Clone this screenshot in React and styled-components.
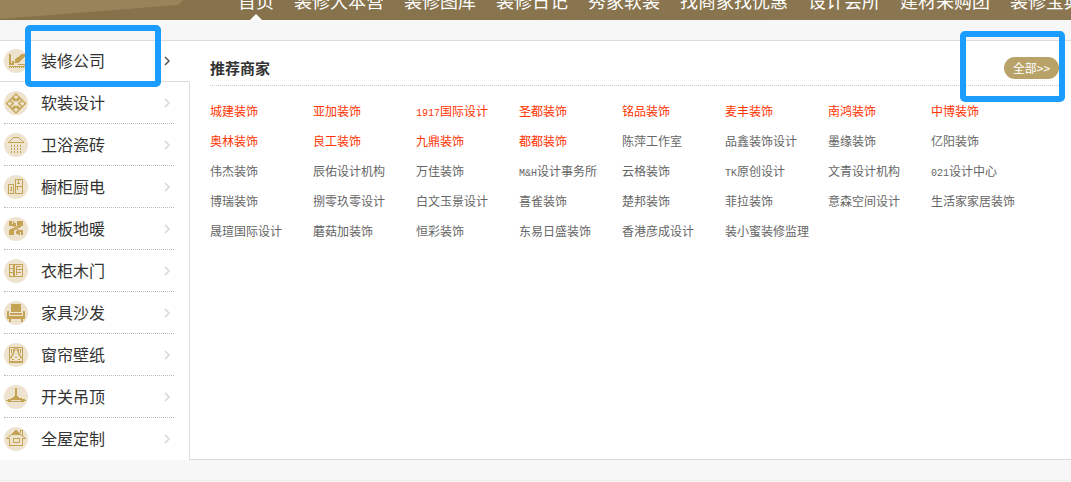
import React from "react";
import styled, { createGlobalStyle, css } from "styled-components";

const GlobalStyle = createGlobalStyle`
  *, *::before, *::after { box-sizing: border-box; }
  body {
    margin: 0;
    overflow-x: hidden;
    background: #f7f7f7;
    color: #333;
    font-family: "Noto Sans CJK SC", sans-serif;
  }
  ul { list-style: none; margin: 0; padding: 0; }
  a { color: inherit; text-decoration: none; }
`;

const Header = styled.header`
  position: relative;
  display: flex;
  align-items: flex-end;
  height: 20px;
  overflow: hidden;
  background: linear-gradient(90deg, #85714a, #8a7650);
`;

const HeaderFacets = styled.svg`
  position: absolute;
  top: 0;
  left: 0;
`;

const NavList = styled.ul`
  position: relative;
  display: flex;
  padding-left: 228px;
`;

const NavLink = styled.a`
  display: block;
  padding: 0 10px;
  color: #fff;
  font-size: 18px;
  line-height: 40px;
  white-space: nowrap;
  ${(p) =>
    p.$active &&
    css`
      &::after {
        content: "";
        position: absolute;
        bottom: 0;
        left: 250px;
        border: 6px solid transparent;
        border-top: 0;
        border-bottom-color: #fff;
      }
    `}
`;

const Panel = styled.main`
  display: flex;
  margin-top: 20px;
  border-top: 1px solid #dcdcdc;
  background: #fff;
`;

const Sidebar = styled.nav`
  flex: none;
  width: 190px;
`;

const CategoryRow = styled.li`
  position: relative;
  padding: 0 15px 0 4px;
  border-right: 1px solid ${(p) => (p.$active ? "transparent" : "#dcdcdc")};
  ${(p) => p.$active && "border-bottom: 1px solid #dcdcdc;"}
`;

const CategoryLink = styled.a`
  display: flex;
  align-items: center;
  height: ${(p) => (p.$active ? "40px" : "42px")};
  padding-right: 4px;
  border-bottom: ${(p) => (p.$active || p.$last ? "0" : "1px dotted #bbb")};
  color: ${(p) => (p.$active ? "#555" : "#d5d5d5")};
`;

const CategoryName = styled.span`
  flex: 1;
  margin-left: 13px;
  padding-bottom: 2px;
  color: #333;
  font-size: 16px;
  line-height: 24px;
`;

const Content = styled.section`
  flex: 1;
  min-width: 0;
  min-height: 419px;
  padding: 0 12px 0 20px;
  border-bottom: 1px solid #dcdcdc;
`;

const ContentHead = styled.div`
  display: flex;
  align-items: center;
  justify-content: space-between;
  height: 45px;
  padding-top: 10px;
  border-bottom: 1px dotted #ccc;
`;

const Title = styled.h2`
  margin: 0;
  font-size: 15px;
  font-weight: 700;
  line-height: 24px;
`;

const AllWrap = styled.div`
  position: relative;
`;

const AllButton = styled.button`
  display: block;
  width: 55px;
  height: 22px;
  padding: 0;
  border: 0;
  border-radius: 11px;
  background: #b9a267;
  color: #fff;
  font-family: inherit;
  font-size: 12px;
  line-height: 22px;
`;

const ShopGrid = styled.ul`
  display: grid;
  grid-template-columns: repeat(auto-fill, 103px);
  grid-auto-rows: 30px;
  padding-top: 10px;
`;

const ShopLink = styled.a`
  display: block;
  color: ${(p) => (p.$hot ? "#ff3300" : "#666")};
  font-size: 12px;
  line-height: 30px;
  white-space: nowrap;
`;

const Latin = styled.span`
  font-family: "Liberation Mono", monospace;
  font-size: 10px;
`;

const Marker = styled.span`
  position: absolute;
  z-index: 2;
  top: ${(p) => p.$top};
  left: ${(p) => p.$left};
  width: ${(p) => p.$width};
  height: ${(p) => p.$height};
  border: 6px solid #1b9cff;
  border-radius: 5px;
  pointer-events: none;
`;

const Footer = styled.footer`
  margin-top: 20px;
  height: 2px;
  border-top: 1px solid #f1edeb;
`;

const Drawing = styled.svg`
  flex: none;
  display: block;
`;

const G = "#c5a355";

const icons = {
  design: (
    <>
      <path d="M5 5h2v9h3v2H5zM8 12h2v2H8zM14 16h7v-1h-8z" fill={G} stroke="none" />
      <path d="M5 17.500h16" />
      <path d="M5 18.500h16" strokeDasharray="1 1" />
      <path d="M10 14l1.500-4L18 5h3v2l-7 7z" fill={G} stroke="none" />
    </>
  ),
  soft: (
    <>
      <path d="M12 3l9.500 9.500L12 22 2.500 12.500z" shapeRendering="auto" strokeWidth="1.300" />
      <path d="M7.500 8h2.500v2.500M16.500 8H14v2.500M7.500 17H10v-2.500M16.500 17H14v-2.500" shapeRendering="auto" strokeWidth="1.500" />
      <path d="M9 6.500l3 3 3-3M9 18.500l3-3 3 3M6 9.500l3 3-3 3M18 9.500l-3 3 3 3" shapeRendering="auto" strokeWidth="1.500" />
    </>
  ),
  shower: (
    <>
      <path d="M4 9.500h16M4.500 8.500h1M6 7.500h1M7 6.500h1M8 5.500h1M9 4.500h6M15 5.500h1M16 6.500h1M17 7.500h1M18.500 8.500h1" />
      <path d="M7.500 12v8M10.500 12v8M13.500 12v8M16.500 12v8" strokeDasharray="2 1" strokeWidth="1" />
    </>
  ),
  kitchen: (
    <>
      <path d="M4 9h6v10H4zM5 10v8h4v-8zM11 4h8v15h-8zM12 5v6h6V5zM12 12v6h6v-6z" fill={G} fillRule="evenodd" stroke="none" />
      <path d="M6 12.500h2M6 15.500h2M7.500 12v4M13 8.500h3M14.500 5v3M13.500 12v3" />
    </>
  ),
  floor: (
    <>
      <path d="M5 4h5v5H5zM13 4h6v5h-6zM5 13h5v5H5zM14 13h5v5h-5z" fill={G} stroke="none" />
      <path d="M9 8l6 6M15 8l-6 6" strokeWidth="1.500" shapeRendering="auto" />
      <path d="M10 6h2v3h-2zM14 9h3v2h-3zM6 11h4v2H6zM12 14h2v3h-2z" fill={G} stroke="none" />
      <path d="M8 4v3M16 18v-3M5 11h3M19 10h-3" stroke="#eee3ce" />
    </>
  ),
  wardrobe: (
    <>
      <path d="M5.500 5.500h13v12h-13zM12.500 7v9" />
      <path d="M9.500 5.500v12" strokeWidth="2" />
      <path d="M5 9.500h4M5 13.500h4M12 10.500h6M13 7.500h4M13 13.500h4" />
    </>
  ),
  sofa: (
    <path d="M7 3h10v8H7zM3 10h2v5h14v-5h2v8h-2v3h-2v-3H7v3H5v-3H3zM6 12h12v2H6z" fill={G} stroke="none" />
  ),
  curtain: (
    <>
      <path d="M5.500 4.500h13v15h-13z" />
      <path d="M5 18.500h14" strokeWidth="2" />
      <path d="M11 5L9.500 10l-3 5.500M13 5l1.500 5 3 5.500" shapeRendering="auto" strokeWidth="1.500" />
      <path d="M7.500 6v4M16.500 6v4M9.500 6v2M14.500 6v2M8 16.500h2M14 16.500h2M11 14.500h2" />
    </>
  ),
  ceiling: (
    <path d="M11 3h2v8l3 2 6 2v1h-2v1H4v-1H2v-1l6-2 3-2zM7 15v1h10v-1z" fill={G} fillRule="evenodd" stroke="none" />
  ),
  house: (
    <>
      <path d="M2.500 11.500L12 4l9.500 7.500" shapeRendering="auto" />
      <path d="M2 11.500h3.500v7h13v-7H22M9.500 11.500h6v4h-6z" />
      <path d="M6 8l6-5 6 5z" fill={G} stroke="none" />
      <path d="M16.500 6V3.500h2V9" />
    </>
  ),
};

function CategoryIcon({ name }) {
  return (
    <Drawing width="24" height="24" viewBox="0 0 24 24" fill="none" stroke={G} aria-hidden="true">
      <circle cx="12" cy="12" r="12" fill="#eee3ce" stroke="none" />
      <g shapeRendering="crispEdges">{icons[name]}</g>
    </Drawing>
  );
}

function Arrow() {
  return (
    <Drawing width="6" height="10" viewBox="0 0 6 10" fill="none" stroke="currentColor" strokeWidth="1.500" aria-hidden="true">
      <path d="M1 1l4 4-4 4" />
    </Drawing>
  );
}

const navItems = ["首页", "装修大本营", "装修图库", "装修日记", "秀家软装", "找商家找优惠", "设计会所", "建材采购团", "装修宝典"];

const categories = [
  ["装修公司", "design"],
  ["软装设计", "soft"],
  ["卫浴瓷砖", "shower"],
  ["橱柜厨电", "kitchen"],
  ["地板地暖", "floor"],
  ["衣柜木门", "wardrobe"],
  ["家具沙发", "sofa"],
  ["窗帘壁纸", "curtain"],
  ["开关吊顶", "ceiling"],
  ["全屋定制", "house"],
];

const hotShops = [
  "城建装饰", "亚加装饰", "1917国际设计", "圣都装饰", "铭品装饰", "麦丰装饰", "南鸿装饰", "中博装饰",
  "奥林装饰", "良工装饰", "九鼎装饰", "都都装饰",
];

const shops = [
  "陈萍工作室", "品鑫装饰设计", "墨缘装饰", "亿阳装饰",
  "伟杰装饰", "辰佑设计机构", "万佳装饰", "M&H设计事务所", "云格装饰", "TK原创设计", "文青设计机构", "021设计中心",
  "博瑞装饰", "捌零玖零设计", "白文玉景设计", "喜雀装饰", "楚邦装饰", "菲拉装饰", "意森空间设计", "生活家家居装饰",
  "晟瑄国际设计", "蘑菇加装饰", "恒彩装饰", "东易日盛装饰", "香港彦成设计", "装小蜜装修监理",
];

function Shop({ name, hot }) {
  const [, latin, rest] = name.match(/^([\x21-\x7e]*)(.*)$/);
  return (
    <li>
      <ShopLink href="#" $hot={hot}>
        {latin && <Latin>{latin}</Latin>}
        {rest}
      </ShopLink>
    </li>
  );
}

export default function App() {
  return (
    <>
      <GlobalStyle />
      <Header>
        <HeaderFacets width="190" height="20" viewBox="0 0 190 20" aria-hidden="true">
          <path d="M0 0h184l-6 5L0 19z" fill="#98845a" />
        </HeaderFacets>
        <nav>
          <NavList>
            {navItems.map((item, i) => (
              <li key={item}>
                <NavLink href="#" $active={i === 0}>{item}</NavLink>
              </li>
            ))}
          </NavList>
        </nav>
      </Header>
      <Panel>
        <Sidebar>
          <ul>
            {categories.map(([name, icon], i) => (
              <CategoryRow key={name} $active={i === 0}>
                <CategoryLink href="#" $active={i === 0} $last={i === categories.length - 1}>
                  <CategoryIcon name={icon} />
                  <CategoryName>{name}</CategoryName>
                  <Arrow />
                </CategoryLink>
                {i === 0 && <Marker $top="-16px" $left="25px" $width="136px" $height="62px" />}
              </CategoryRow>
            ))}
          </ul>
        </Sidebar>
        <Content>
          <ContentHead>
            <Title>推荐商家</Title>
            <AllWrap>
              <AllButton type="button">全部&gt;&gt;</AllButton>
              <Marker $top="-26px" $left="-44px" $width="105px" $height="71px" />
            </AllWrap>
          </ContentHead>
          <ShopGrid>
            {hotShops.map((name) => <Shop key={name} name={name} hot />)}
            {shops.map((name) => <Shop key={name} name={name} />)}
          </ShopGrid>
        </Content>
      </Panel>
      <Footer />
    </>
  );
}
